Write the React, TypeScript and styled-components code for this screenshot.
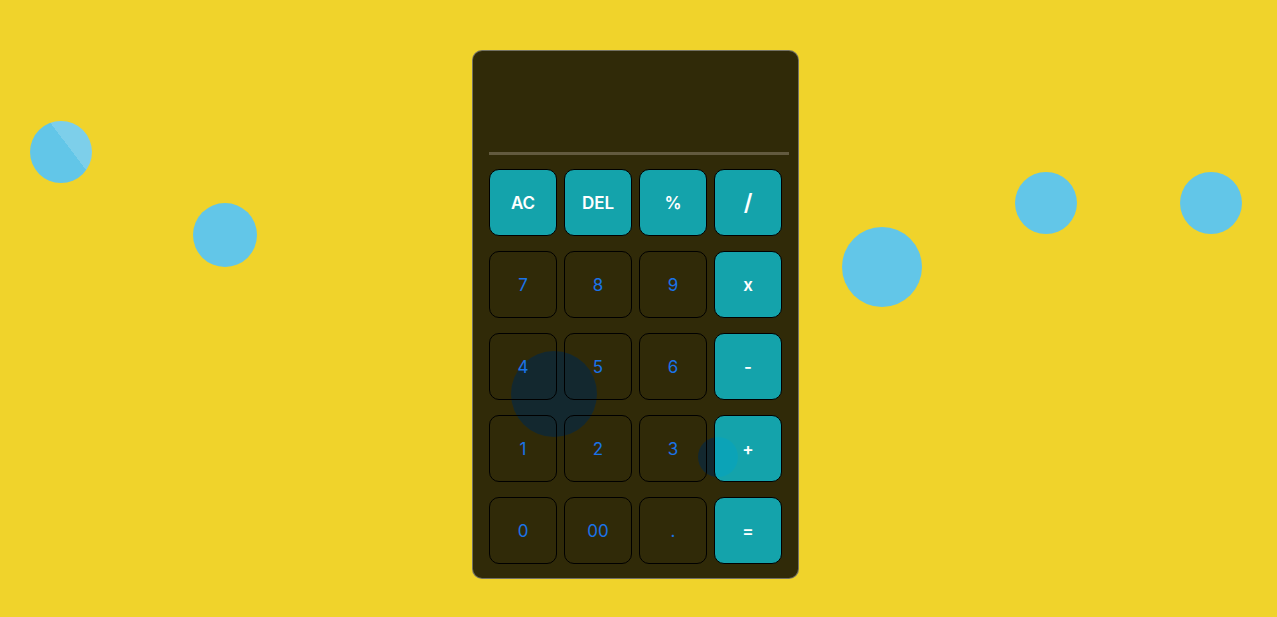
import React from "react";
import styled, { createGlobalStyle } from "styled-components";

const Global = createGlobalStyle`
  html, body { margin: 0; padding: 0; }
  body {
    background: #f0d32b;
    font-family: "Inter", "Noto Sans", sans-serif;
    overflow: hidden;
  }
`;

const Page = styled.div`
  position: relative;
  width: 1277px;
  height: 617px;
  display: flex;
  justify-content: center;
  align-items: flex-start;
  padding-top: 50px;
  box-sizing: border-box;
`;

const Bubble = styled.div<{ $x: number; $y: number; $r: number }>`
  position: absolute;
  left: ${(p) => p.$x - p.$r}px;
  top: ${(p) => p.$y - p.$r}px;
  width: ${(p) => p.$r * 2}px;
  height: ${(p) => p.$r * 2}px;
  border-radius: 50%;
  background: #62c6e8;
`;

const ShinyBubble = styled(Bubble)`
  background: linear-gradient(53deg, #62c6e8 60.5%, #7dcfea 60.5%);
`;

const Calculator = styled.div`
  position: relative;
  z-index: 1;
  width: 309px;
  box-sizing: content-box;
  padding: 16px 0 14px 16px;
  margin-left: -6px;
  background: rgba(0, 0, 0, 0.8);
  border: 1px solid rgba(160, 160, 160, 0.6);
  border-radius: 10px;
  display: flex;
  flex-direction: column;
`;

const Display = styled.div`
  width: 300px;
  height: 85px;
  border-bottom: 3px solid #625a3f;
  margin-bottom: 14px;
`;

const Keys = styled.div`
  display: grid;
  grid-template-columns: repeat(4, 68px);
  grid-auto-rows: 67px;
  column-gap: 7px;
  row-gap: 15px;
`;

const Key = styled.button<{ $op?: boolean; $big?: boolean }>`
  box-sizing: border-box;
  border: 1px solid #000;
  border-radius: 10px;
  background: ${(p) => (p.$op ? "rgba(8, 215, 241, 0.7)" : "transparent")};
  color: ${(p) => (p.$op ? "#ffffff" : "#1a73e8")};
  font-family: "Inter", "Noto Sans", sans-serif;
  font-size: ${(p) => (p.$big ? "23px" : "17px")};
  font-weight: ${(p) => (p.$op ? 600 : 400)};
  display: flex;
  align-items: center;
  justify-content: center;
  padding: 0;
  cursor: pointer;
`;

const keys: { label: string; op?: boolean; big?: boolean }[] = [
  { label: "AC", op: true },
  { label: "DEL", op: true },
  { label: "%", op: true },
  { label: "/", op: true, big: true },
  { label: "7" },
  { label: "8" },
  { label: "9" },
  { label: "x", op: true },
  { label: "4" },
  { label: "5" },
  { label: "6" },
  { label: "-", op: true },
  { label: "1" },
  { label: "2" },
  { label: "3" },
  { label: "+", op: true },
  { label: "0" },
  { label: "00" },
  { label: "." },
  { label: "=", op: true },
];

export default function App() {
  return (
    <>
      <Global />
      <Page>
        <ShinyBubble $x={61} $y={152} $r={31} />
        <Bubble $x={225} $y={235} $r={32} />
        <Bubble $x={882} $y={267} $r={40} />
        <Bubble $x={1046} $y={203} $r={31} />
        <Bubble $x={1211} $y={203} $r={31} />
        <Bubble $x={554} $y={394} $r={43} />
        <Bubble $x={718} $y={457} $r={20} />
        <Calculator>
          <Display />
          <Keys>
            {keys.map((k) => (
              <Key key={k.label} $op={k.op} $big={k.big}>
                {k.label}
              </Key>
            ))}
          </Keys>
        </Calculator>
      </Page>
    </>
  );
}
